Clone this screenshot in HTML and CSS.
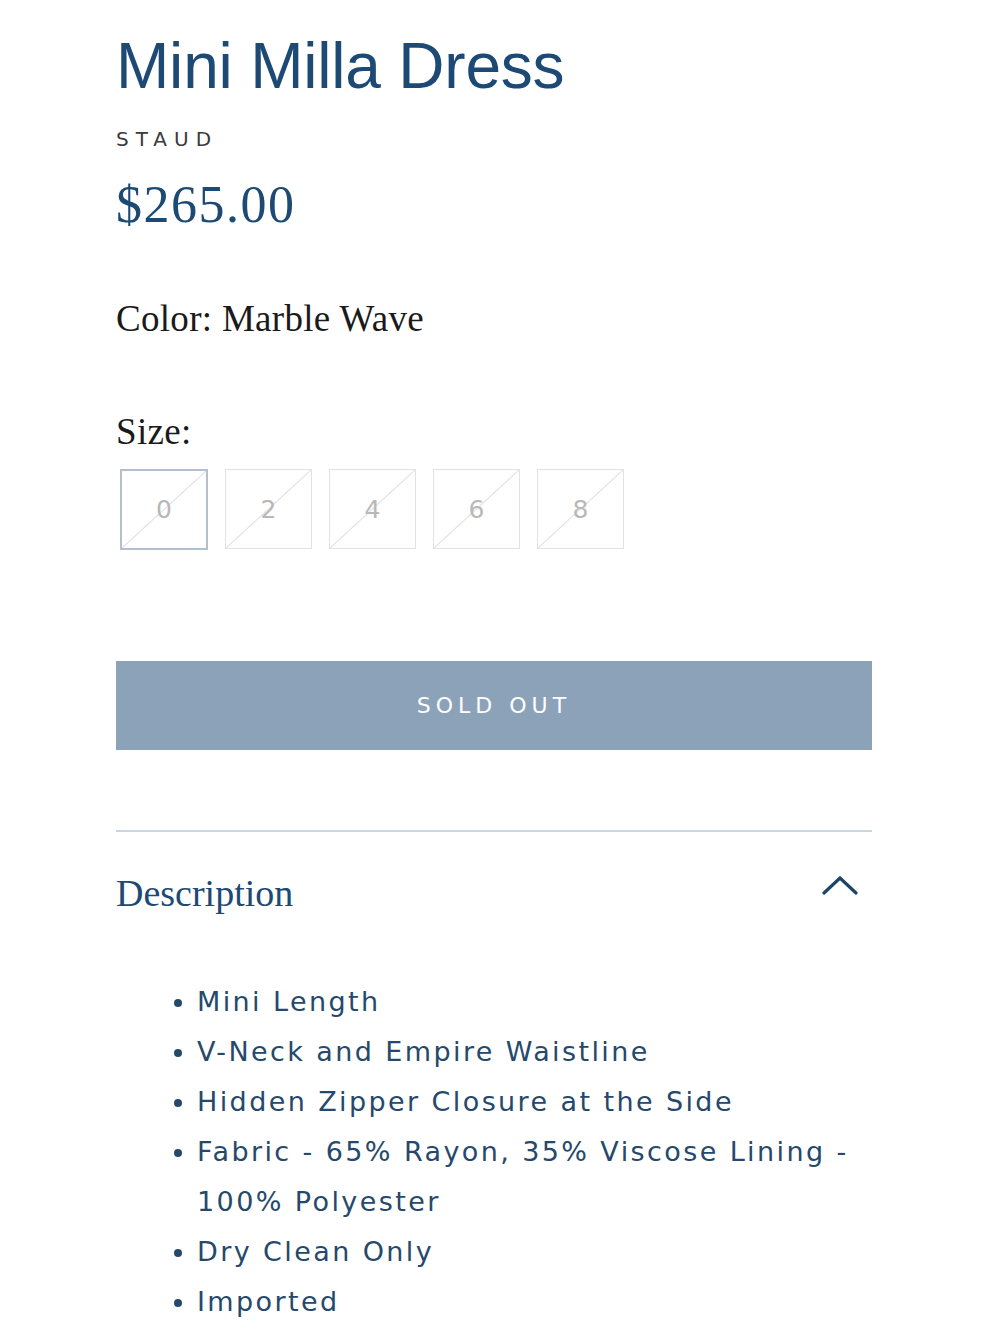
FILE: index.html
```html
<!DOCTYPE html>
<html>
<head>
  <title>Mini Milla Dress</title>
  <link rel="stylesheet" href="styles.css">
</head>
<body>
  <div class="product">
    <h1 class="title">Mini Milla Dress</h1>
    <div class="brand">STAUD</div>
    <div class="price">$265.00</div>

    <div class="option-label">Color: Marble Wave</div>

    <div class="option-label size-label">Size:</div>
    <div class="sizes">
      <div class="size selected">0</div>
      <div class="size">2</div>
      <div class="size">4</div>
      <div class="size">6</div>
      <div class="size">8</div>
    </div>

    <button class="sold-out" disabled>SOLD OUT</button>

    <div class="accordion">
      <div class="accordion-head">
        <span class="accordion-title">Description</span>
        <svg class="chevron" width="36" height="20" viewBox="0 0 36 20">
          <polyline points="2,17 18,2 34,17" fill="none" stroke="#1d4469" stroke-width="3.2" stroke-linecap="round" stroke-linejoin="miter"/>
        </svg>
      </div>
      <ul class="features">
        <li>Mini Length</li>
        <li>V-Neck and Empire Waistline</li>
        <li>Hidden Zipper Closure at the Side</li>
        <li>Fabric - 65% Rayon, 35% Viscose Lining - 100% Polyester</li>
        <li>Dry Clean Only</li>
        <li>Imported</li>
      </ul>
    </div>
  </div>
</body>
</html>
```

FILE: styles.css
```css
body {
  margin: 0;
  background: #fff;
  font-family: "Liberation Serif", serif;
}

.product {
  width: 756px;
  margin-left: 116px;
  padding-top: 30px;
}

.title {
  margin: 0;
  font-family: "Liberation Sans", Arial, sans-serif;
  font-weight: normal;
  font-size: 64px;
  line-height: 72px;
  color: #1d4a75;
  letter-spacing: -0.2px;
}

.brand {
  margin-top: 25px;
  font-family: "DejaVu Sans", sans-serif;
  font-size: 20px;
  line-height: 24px;
  letter-spacing: 7px;
  color: #3a3a3a;
}

.price {
  margin-top: 24px;
  font-size: 52px;
  line-height: 60px;
  letter-spacing: 1.5px;
  color: #1d4a75;
}

.option-label {
  margin-top: 62px;
  font-size: 37px;
  line-height: 44px;
  letter-spacing: 0.3px;
  color: #1a1a1a;
}

.size-label {
  margin-top: 69px;
}

.sizes {
  display: flex;
  gap: 17px;
  margin-top: 15px;
  margin-left: 4px;
}

.size {
  width: 85px;
  height: 78px;
  border: 1px solid #e2e2e2;
  display: flex;
  align-items: center;
  justify-content: center;
  font-family: "DejaVu Sans", sans-serif;
  font-size: 25px;
  color: #b8b8b8;
  background: linear-gradient(to bottom right, transparent calc(50% - 1px), #dedede 50%, transparent calc(50% + 1px));
}

.size.selected {
  border: 2px solid #b4bfcd;
  width: 84px;
  height: 77px;
}

.sold-out {
  display: block;
  width: 100%;
  height: 89px;
  margin-top: 111px;
  border: none;
  background: #8ca2b9;
  color: #fff;
  font-family: "DejaVu Sans", sans-serif;
  font-size: 22px;
  letter-spacing: 5px;
}

.accordion {
  margin-top: 80px;
  border-top: 2px solid #c9d6e1;
}

.accordion-head {
  display: flex;
  justify-content: space-between;
  align-items: flex-start;
  margin-top: 39px;
}

.accordion-title {
  font-size: 38px;
  line-height: 44px;
  color: #1d4a75;
}

.chevron {
  margin-top: 5px;
  margin-right: 14px;
}

.features {
  margin: 62px 0 0 0;
  padding-left: 81px;
  font-family: "DejaVu Sans", sans-serif;
  font-size: 27px;
  line-height: 50px;
  color: #26496b;
  letter-spacing: 2.4px;
}
```
